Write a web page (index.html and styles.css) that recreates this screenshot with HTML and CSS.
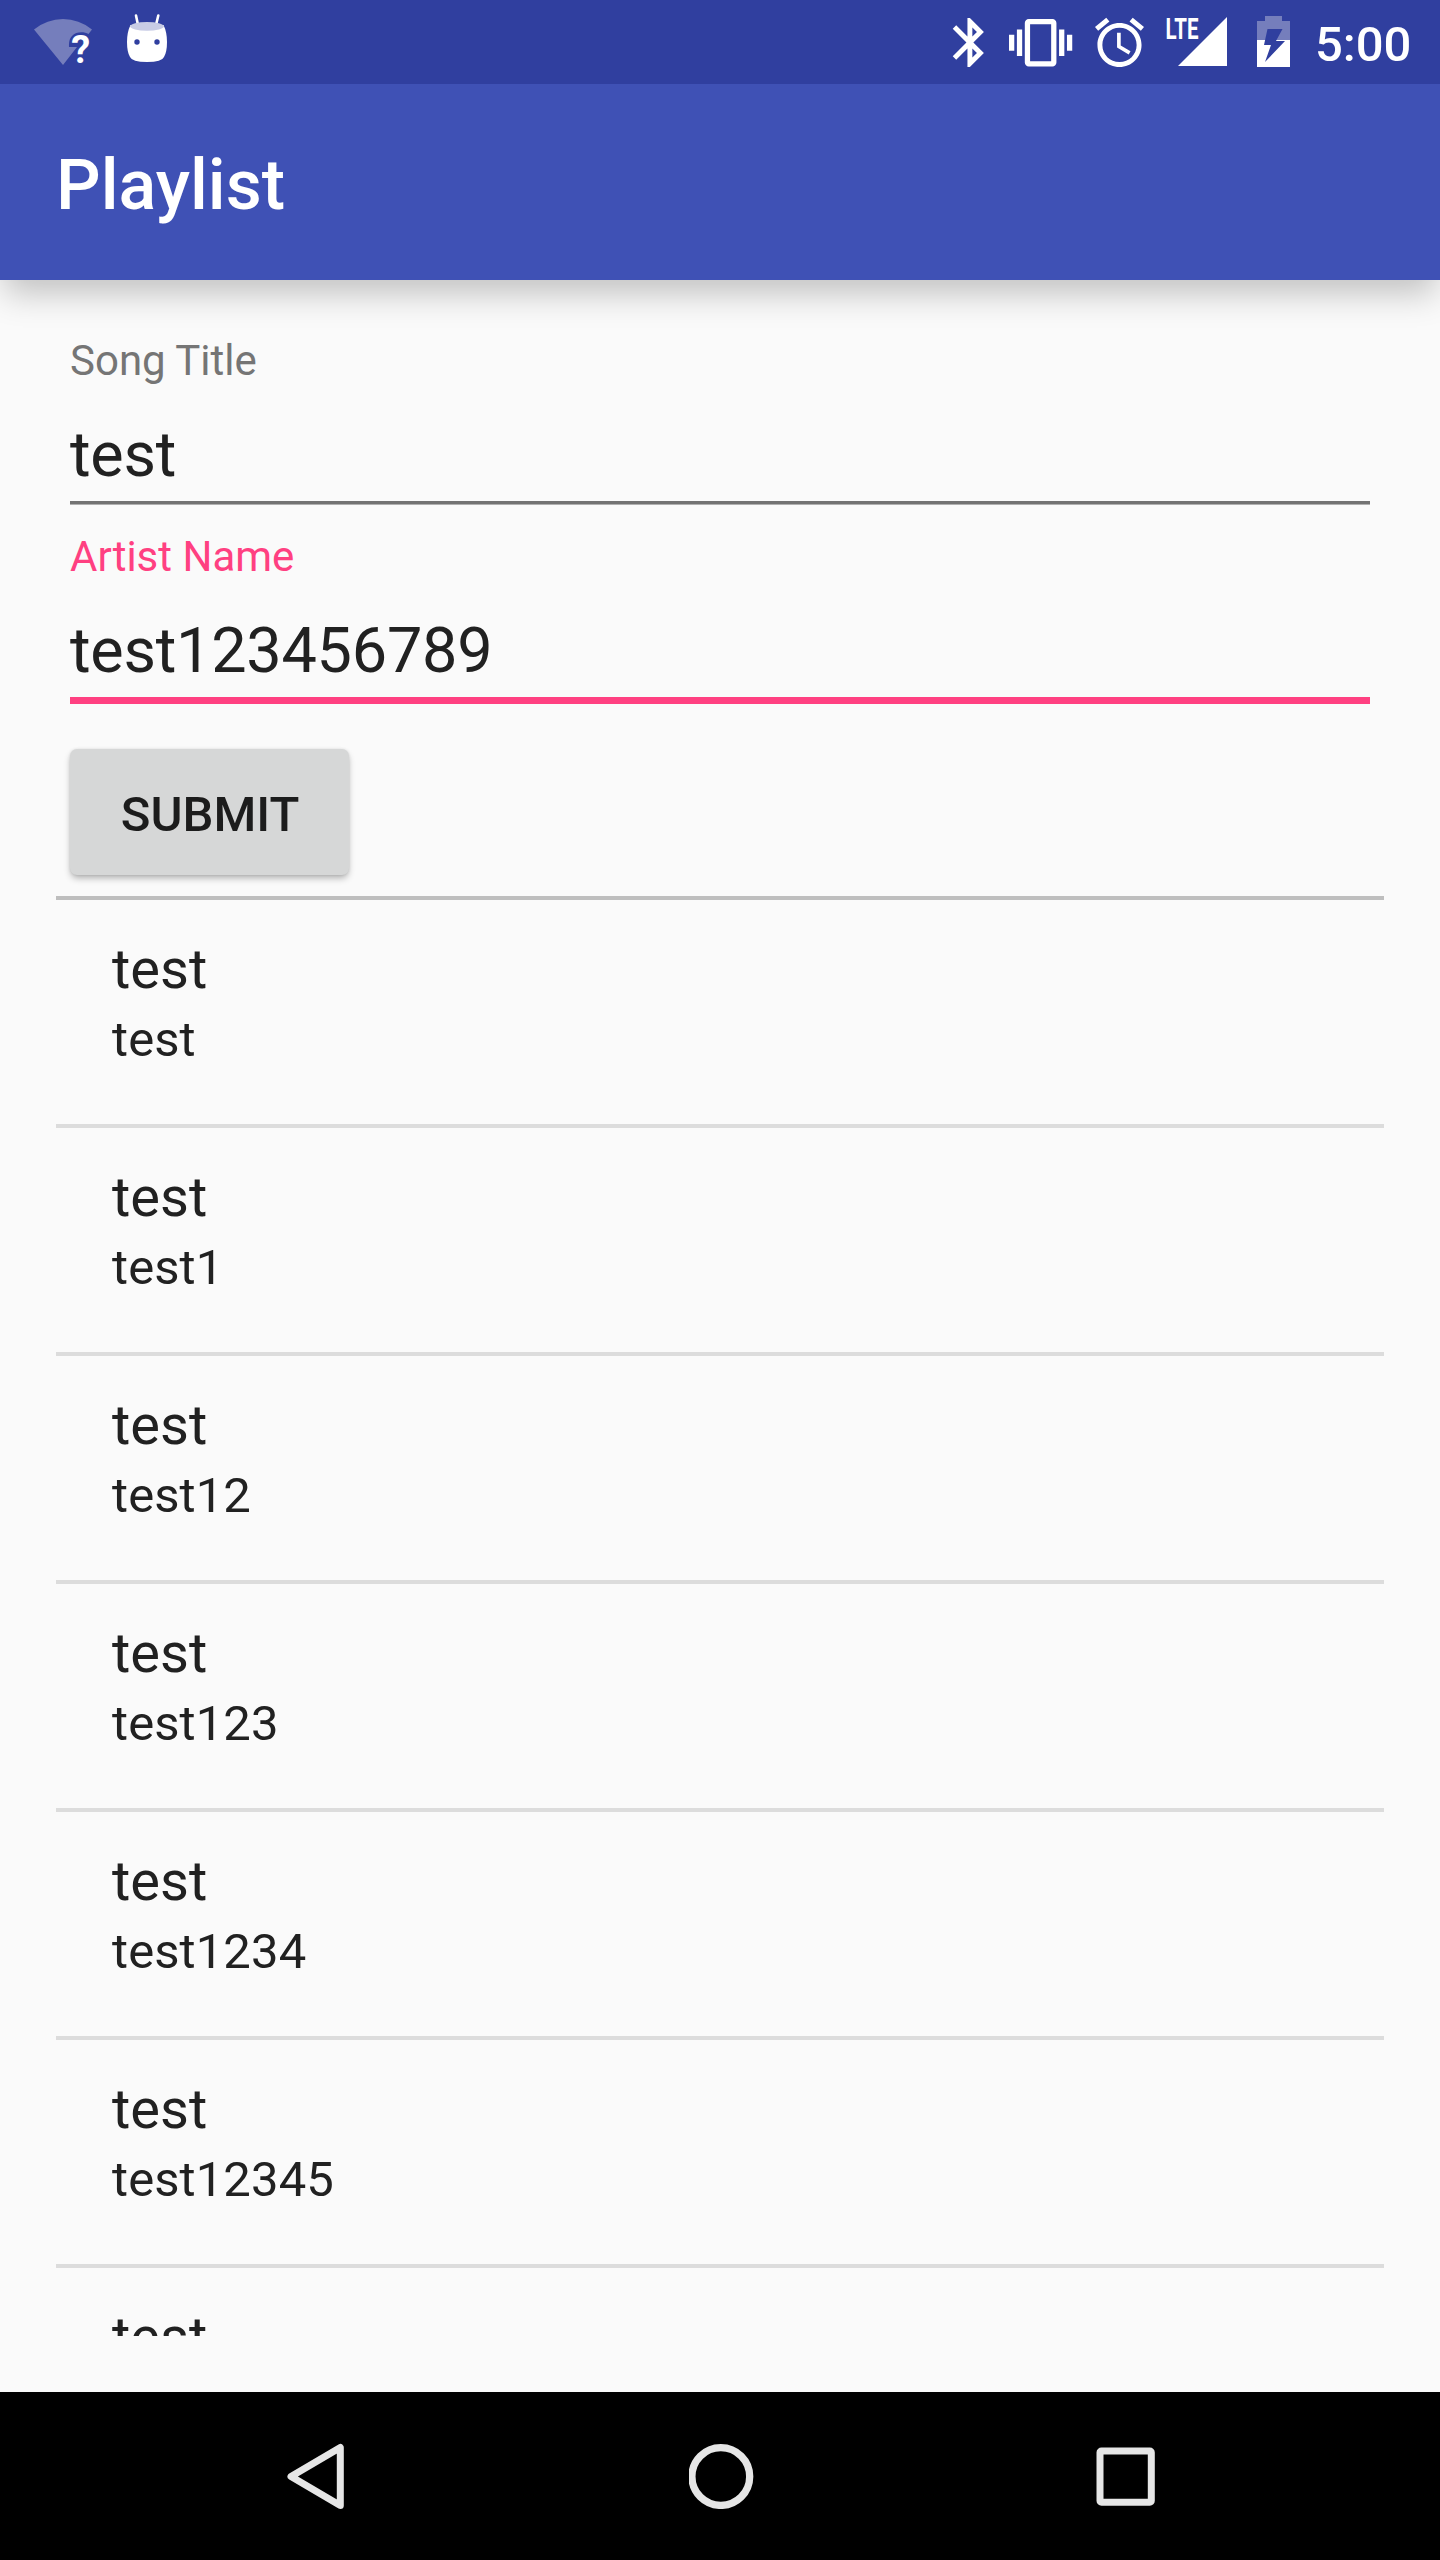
FILE: index.html
```html
<!DOCTYPE html>
<html lang="en">
<head>
<meta charset="utf-8">
<title>Playlist</title>
<link rel="stylesheet" href="styles.css">
</head>
<body>
<div class="screen">
  <div class="status-bar">
    <svg class="icon-wifi" width="62" height="84" viewBox="32 0 62 84">
      <path fill="#757ebc" d="M63 65 34 29.5Q47 19 63 19T92 29.5L88.5 34C84 31.500 76 31.500 72 36C69 39 69 43 69 47H77Z"/>
      <text class="wifi-mark" x="71.300" y="63">?</text>
    </svg>
    <svg class="icon-android" width="46" height="84" viewBox="124 0 46 84">
      <path fill="none" stroke="#fff" stroke-width="2.600" stroke-linecap="round" d="M136 15.500 138 25M158.300 15.500 156 25"/>
      <path fill="#fff" d="M130.500 25Q127 32 127 42T130 57Q132 62 147 62T164 57Q167 52 167 42T163.500 25Z"/>
      <ellipse fill="#c8cce5" cx="147" cy="26.300" rx="16.800" ry="4.400"/>
      <circle fill="#303f9f" cx="137" cy="42" r="2.700"/>
      <circle fill="#303f9f" cx="157" cy="42" r="2.700"/>
    </svg>
    <svg class="icon-bluetooth" width="36" height="84" viewBox="950 0 36 84">
      <path fill="#fff" transform="translate(940.500 13.100) scale(2.450)" d="M17.710 7.710L12 2h-1v7.590L6.410 5 5 6.410 10.590 12 5 17.590 6.410 19 11 14.410V22h1l5.710-5.710-4.300-4.290 4.300-4.290zM13 5.830l1.880 1.880L13 9.590V5.830zm1.880 10.460L13 18.170v-3.760l1.880 1.880z"/>
    </svg>
    <svg class="icon-vibrate" width="66" height="84" viewBox="1008 0 66 84">
      <path fill="#fff" transform="translate(1009 11.100) scale(2.635)" d="M0 15h2V9H0v6zm3 2h2V7H3v10zm19-8v6h2V9h-2zm-3 8h2V7h-2v10zM16.500 3h-9C6.670 3 6 3.670 6 4.500v15c0 .83.67 1.500 1.500 1.500h9c.83 0 1.500-.67 1.500-1.500v-15c0-.83-.67-1.500-1.500-1.500zM16 19H8V5h8v14z"/>
    </svg>
    <svg class="icon-alarm" width="52" height="84" viewBox="1094 0 52 84">
      <path fill="#fff" transform="translate(1090.100 13.100) scale(2.450)" d="M22 5.720l-4.600-3.860-1.290 1.530 4.600 3.860L22 5.720zM7.880 3.390L6.600 1.860 2 5.710l1.290 1.530 4.590-3.850zM12.500 8H11v6l4.750 2.850.75-1.230-4-2.370V8zM12 4c-4.970 0-9 4.030-9 9s4.020 9 9 9c4.970 0 9-4.030 9-9s-4.030-9-9-9zm0 16c-3.870 0-7-3.130-7-7s3.130-7 7-7 7 3.130 7 7-3.130 7-7 7z"/>
    </svg>
    <svg class="icon-signal" width="62" height="84" viewBox="1166 0 62 84">
      <path fill="#fff" d="M1178 66H1227V17Z"/>
      <text class="signal-mark" x="1165.500" y="39" textLength="33" lengthAdjust="spacingAndGlyphs">LTE</text>
    </svg>
    <svg class="icon-battery" width="35" height="84" viewBox="1256 0 35 84">
      <path fill="#757ebc" d="M1257 40V21H1265V16H1282V21H1290V40Z"/>
      <path fill="#fff" d="M1257 40H1290V67H1257Z"/>
      <path fill="#303f9f" d="M1267.500 29H1282.500L1276 41H1285L1265 62 1271 45H1264Z"/>
    </svg>
    <span class="clock">5:00</span>
  </div>
  <header class="toolbar"><h1 class="toolbar-title">Playlist</h1></header>
  <main class="content">
    <section class="form">
      <div class="field">
        <div class="field-label">Song Title</div>
        <div class="field-value">test</div>
        <div class="field-line"></div>
      </div>
      <div class="field field-focused">
        <div class="field-label">Artist Name</div>
        <div class="field-value">test123456789</div>
        <div class="field-line"></div>
      </div>
      <button class="submit" type="button">SUBMIT</button>
    </section>
    <ul class="songs">
      <li class="song"><div class="song-title">test</div><div class="song-artist">test</div></li>
      <li class="song"><div class="song-title">test</div><div class="song-artist">test1</div></li>
      <li class="song"><div class="song-title">test</div><div class="song-artist">test12</div></li>
      <li class="song"><div class="song-title">test</div><div class="song-artist">test123</div></li>
      <li class="song"><div class="song-title">test</div><div class="song-artist">test1234</div></li>
      <li class="song"><div class="song-title">test</div><div class="song-artist">test12345</div></li>
      <li class="song"><div class="song-title">test</div></li>
    </ul>
  </main>
  <nav class="nav-bar">
    <svg width="66" height="66" viewBox="0 0 66 66">
      <path fill="none" stroke="#e6e6e6" stroke-width="7" stroke-linejoin="round" d="M55.300 4.500V62.500L6 33.500Z"/>
    </svg>
    <svg width="66" height="66" viewBox="0 0 66 66">
      <circle fill="none" stroke="#e6e6e6" stroke-width="7.300" cx="31.800" cy="33.500" r="28.900"/>
    </svg>
    <svg width="66" height="66" viewBox="0 0 66 66">
      <rect fill="none" stroke="#e6e6e6" stroke-width="7" x="8" y="8" width="51.300" height="51.300" rx="1.500"/>
    </svg>
  </nav>
</div>
</body>
</html>
```
FILE: styles.css
```css
* { box-sizing: border-box; }

body {
  margin: 0;
  background: #fafafa;
  font-family: Roboto, "Liberation Sans", sans-serif;
  color: #212121;
}

.screen {
  display: flex;
  flex-direction: column;
  width: 1440px;
  height: 2560px;
  overflow: hidden;
}

/* Status bar */
.status-bar {
  display: flex;
  flex: none;
  height: 84px;
  padding-left: 32px;
  background: #303f9f;
}
.status-bar svg { flex: none; display: block; }
.icon-android { margin-left: 30px; }
.icon-bluetooth { margin-left: 780px; }
.icon-vibrate { margin-left: 22px; }
.icon-alarm { margin-left: 20px; }
.icon-signal { margin-left: 20px; }
.icon-battery { margin-left: 28px; }
.wifi-mark { font-size: 38px; font-weight: 700; fill: #fff; }
.signal-mark { font-size: 29.500px; font-weight: 700; fill: #fff; }
.clock {
  margin-left: 24px;
  padding-top: 5px;
  color: #fff;
  font-size: 49px;
  font-weight: 500;
  line-height: 79px;
}

/* Toolbar */
.toolbar {
  flex: none;
  height: 196px;
  padding: 6px 56px 0;
  background: #3f51b5;
  box-shadow: 0 17px 32px -4px rgba(0, 0, 0, 0.23);
  clip-path: inset(0 0 -60px 0);
}
.toolbar-title {
  margin: 0;
  color: #fff;
  font-size: 70px;
  font-weight: 500;
  line-height: 190px;
}

/* Content */
.content {
  display: flex;
  flex: 1;
  flex-direction: column;
  min-height: 0;
  padding: 53px 56px 56px;
}
.form { flex: none; padding: 0 14px 21px; }
.field { height: 196px; }
.field-label {
  color: #757575;
  font-size: 42px;
  line-height: 56px;
}
.field-value {
  margin-top: 24px;
  font-size: 63px;
  line-height: 84px;
  letter-spacing: -0.270px;
}
.field-line {
  height: 3.500px;
  margin-top: 4px;
  background: linear-gradient(#737373 3px, #b0b0b0 3px);
}
.field-focused .field-label { color: #ff4081; }
.field-focused .field-line { height: 7px; background: #ff4081; }

.submit {
  display: block;
  width: 279px;
  height: 126px;
  margin-top: 24px;
  padding: 6px 0 0 1px;
  border: 0;
  border-radius: 7px;
  background: #d6d7d7;
  box-shadow: 0 4px 7px -1px rgba(0, 0, 0, 0.3), 0 0 3px rgba(0, 0, 0, 0.1);
  color: #1c1c1c;
  font: 500 49px/120px Roboto, "Liberation Sans", sans-serif;
}

.songs {
  flex: 1;
  min-height: 0;
  margin: 0;
  padding: 0;
  border-top: 4px solid #bebebe;
  list-style: none;
  overflow: hidden;
}
.song {
  height: 228px;
  padding: 36px 56px 0;
  border-bottom: 4px solid #dcdcdc;
}
.song-title { font-size: 56px; line-height: 66px; }
.song-artist {
  margin-top: 9px;
  font-size: 49px;
  line-height: 58px;
  letter-spacing: 0.100px;
}

/* Navigation bar */
.nav-bar {
  display: flex;
  flex: none;
  align-items: center;
  justify-content: space-between;
  height: 168px;
  padding: 0 282px 0 285px;
  background: #000;
}
```
